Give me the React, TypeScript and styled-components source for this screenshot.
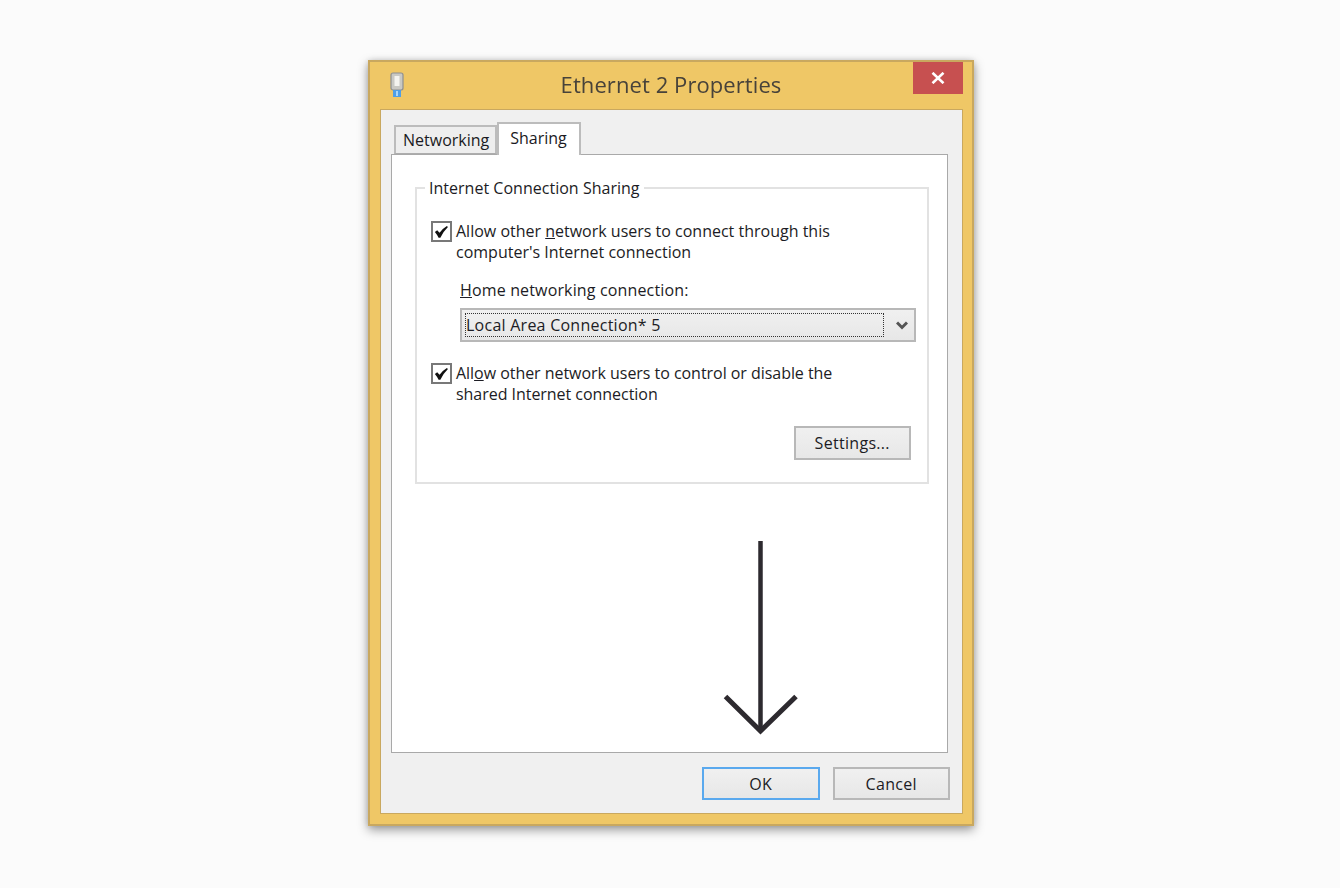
import React from "react";
import styled, { createGlobalStyle } from "styled-components";

const Global = createGlobalStyle`
  html, body { margin: 0; padding: 0; background: #fbfbfb; }
  #root { min-height: 888px; }
  * { box-sizing: border-box; }
`;

const Page = styled.div`
  width: 1340px;
  height: 888px;
  padding: 60px 0 0 368px;
  background: #fbfbfb;
  font-family: "Open Sans", "Noto Sans", sans-serif;
  color: #1c1c1c;
  overflow: hidden;
`;

const Window = styled.div`
  position: relative;
  width: 606px;
  height: 766px;
  display: flex;
  flex-direction: column;
  background: #efc766;
  border: 2px solid #c9a85f;
  box-shadow: 0 4px 10px rgba(0, 0, 0, 0.38), 0 0 6px rgba(0, 0, 0, 0.12);
  filter: blur(0.3px);
`;

const TitleBar = styled.div`
  height: 47px;
  flex: none;
  display: grid;
  grid-template-columns: 1fr auto 1fr;
  align-items: start;
  padding: 0 9px;
`;

const WindowIcon = styled.svg`
  width: 14px;
  height: 26px;
  margin: 10px 0 0 11px;
`;

const Title = styled.div`
  margin-top: 5px;
  font-size: 22px;
  line-height: 34px;
  letter-spacing: 0.08px;
  color: #47423a;
  white-space: nowrap;
`;

const CloseButton = styled.div`
  justify-self: end;
  width: 50px;
  height: 32px;
  background: #c75050;
  display: flex;
  align-items: center;
  justify-content: center;
`;

const Client = styled.div`
  flex: 1;
  margin: 0 9px 10px 10px;
  display: flex;
  flex-direction: column;
  background: #f0f0f0;
  border: 1px solid #c9a85f;
  padding: 0 12px 13px 10px;
`;

const TabRow = styled.div`
  height: 45px;
  flex: none;
  display: flex;
  align-items: flex-end;
  padding-left: 3px;
  margin-bottom: -1px;
`;

const Tab = styled.div<{ $active?: boolean }>`
  position: relative;
  z-index: ${(p) => (p.$active ? 2 : 0)};
  height: ${(p) => (p.$active ? 33 : 29)}px;
  padding: ${(p) => (p.$active ? "0 12px 3px 11px" : "0 6px 0 7px")};
  display: flex;
  align-items: center;
  margin-bottom: ${(p) => (p.$active ? 0 : 1)}px;
  font-size: 16px;
  color: #1a1a22;
  background: ${(p) => (p.$active ? "#fff" : "#eeeeee")};
  border: 2px solid #bcbcbc;
  border-bottom: ${(p) => (p.$active ? "none" : "1px solid #adadad")};
`;

const Panel = styled.div`
  position: relative;
  z-index: 1;
  flex: 1;
  margin-right: 2px;
  background: #fff;
  border: 1px solid #a9a9a9;
  padding: 22px 18px 0 23px;
`;

const Group = styled.fieldset`
  margin: 0;
  padding: 22px 11px 22px 14px;
  border: 2px solid #e2e2e2;
  display: flex;
  flex-direction: column;
`;

const Legend = styled.legend`
  margin-left: -6px;
  padding: 0 4px;
  font-size: 16px;
  line-height: 22px;
  letter-spacing: 0.02px;
  color: #1c1c24;
`;

const CheckRow = styled.div`
  display: flex;
  align-items: flex-start;
  gap: 4px;
`;

const CheckBox = styled.span`
  flex: none;
  width: 21px;
  height: 21px;
  border: 2px solid #787878;
  background: #fff;
  display: flex;
  align-items: center;
  justify-content: center;
`;

const CheckText = styled.div<{ $tight?: boolean }>`
  font-size: 16px;
  line-height: 21px;
  letter-spacing: ${(p) => (p.$tight ? "-0.04px" : "0")};
  color: #1c1c24;
  white-space: pre;
`;

const ComboLabel = styled.div`
  margin: 16px 0 7px 29px;
  font-size: 16px;
  line-height: 22px;
  letter-spacing: 0.15px;
  color: #1c1c24;
`;

const Combo = styled.div`
  margin: 0 0 21px 29px;
  height: 34px;
  display: flex;
  align-items: stretch;
  padding: 3px 0 3px 3px;
  background: linear-gradient(#f0f0f0, #e7e7e7);
  border: 2px solid #b8b8b8;
`;

const ComboValue = styled.div`
  flex: 1;
  display: flex;
  align-items: center;
  font-size: 16px;
  letter-spacing: 0.25px;
  color: #1c1c24;
  border: 1px dotted #333;
`;

const ComboArrow = styled.div`
  flex: none;
  width: 30px;
  padding-left: 6px;
  display: flex;
  align-items: center;
  justify-content: center;
`;

const Button = styled.div<{ $primary?: boolean; $compact?: boolean }>`
  width: 117.5px;
  height: ${(p) => (p.$compact ? 33 : 34)}px;
  display: flex;
  align-items: center;
  justify-content: center;
  font-size: 16px;
  letter-spacing: 0.3px;
  color: #1c1c24;
  background: linear-gradient(#f0f0f0, #e7e7e7);
  border: 2px solid ${(p) => (p.$primary ? "#5aa9ee" : "#b8b8b8")};
`;

const SettingsRow = styled.div`
  display: flex;
  justify-content: flex-end;
  margin: 21px 5px 0 0;
`;

const ButtonRow = styled.div`
  flex: none;
  display: flex;
  justify-content: flex-end;
  gap: 13px;
  margin-top: 14px;
`;

const Arrow = styled.svg`
  position: absolute;
  z-index: 3;
  left: 351px;
  top: 478px;
  width: 80px;
  height: 200px;
`;

const Check = () => (
  <svg width="15" height="14" viewBox="0 0 17 15">
    <path
      d="M1 7.5 L3.6 5.4 L6.3 8.4 Q9.5 3.6 14.6 0.6 L15.8 1.8 Q10.4 7 7.2 14 L5.2 14 Q3.4 10.4 1 7.5 Z"
      fill="#111"
    />
  </svg>
);

export default function App() {
  return (
    <Page>
      <Global />
      <Window>
        <TitleBar>
          <WindowIcon viewBox="0 0 14 26">
            <rect x="1" y="1" width="12" height="17" rx="2" fill="#c9c9c4" stroke="#8d8f92" strokeWidth="1.2" />
            <rect x="4.5" y="4" width="5" height="10" fill="#f4f4f0" />
            <rect x="3" y="18" width="8" height="7" fill="#4f9fe6" />
            <rect x="6" y="19" width="2" height="5" fill="#a9d6f7" />
          </WindowIcon>
          <Title>Ethernet 2 Properties</Title>
          <CloseButton>
            <svg width="14" height="12" viewBox="0 0 14 12">
              <path d="M1.5 0.8 L12.5 11.2 M12.5 0.8 L1.5 11.2" stroke="#fff" strokeWidth="2.6" />
            </svg>
          </CloseButton>
        </TitleBar>
        <Client>
          <TabRow>
            <Tab>Networking</Tab>
            <Tab $active>Sharing</Tab>
          </TabRow>
          <Panel>
            <Group>
              <Legend>Internet Connection Sharing</Legend>
              <CheckRow>
                <CheckBox><Check /></CheckBox>
                <CheckText>
                  Allow other <u>n</u>etwork users to connect through this{"\n"}computer's Internet connection
                </CheckText>
              </CheckRow>
              <ComboLabel><u>H</u>ome networking connection:</ComboLabel>
              <Combo>
                <ComboValue>Local Area Connection* 5</ComboValue>
                <ComboArrow>
                  <svg width="12" height="9" viewBox="0 0 12 9">
                    <path d="M1 1.5 L6 6.5 L11 1.5" fill="none" stroke="#555" strokeWidth="3" />
                  </svg>
                </ComboArrow>
              </Combo>
              <CheckRow>
                <CheckBox><Check /></CheckBox>
                <CheckText $tight>
                  All<u>o</u>w other network users to control or disable the{"\n"}shared Internet connection
                </CheckText>
              </CheckRow>
              <SettingsRow>
                <Button>Settin<u>g</u>s...</Button>
              </SettingsRow>
            </Group>
          </Panel>
          <ButtonRow>
            <Button $primary $compact>OK</Button>
            <Button $compact>Cancel</Button>
          </ButtonRow>
        </Client>
        <Arrow viewBox="0 0 80 200">
          <path d="M39.5 1 V188" stroke="#2d2a2f" strokeWidth="4.5" fill="none" />
          <path d="M4.5 156.5 L39.5 191 L75 156.5" stroke="#2d2a2f" strokeWidth="5" fill="none" strokeMiterlimit="10" />
        </Arrow>
      </Window>
    </Page>
  );
}
